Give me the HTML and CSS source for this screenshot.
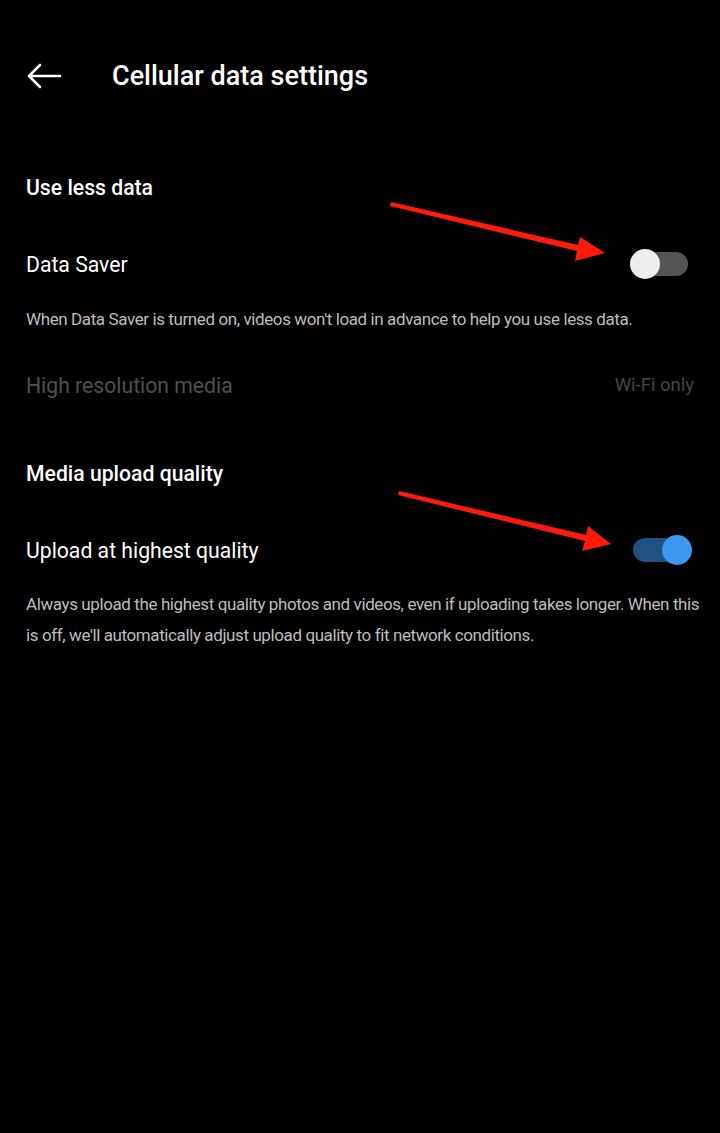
FILE: index.html
```html
<!DOCTYPE html>
<html lang="en">
<head>
    <meta charset="UTF-8">
    <meta name="viewport" content="width=device-width, initial-scale=1.0">
    <title>Cellular data settings</title>
    <link rel="stylesheet" href="styles.css">
</head>
<body>
    <div class="header">
        <svg class="back" width="36" height="26" viewBox="0 0 36 26">
            <path d="M34 13H3M14 2L3 13l11 11" fill="none" stroke="#fff" stroke-width="2.6" stroke-linecap="round" stroke-linejoin="round"/>
        </svg>
        <h1>Cellular data settings</h1>
    </div>

    <div class="section-title first">Use less data</div>
    <div class="row">
        <span class="row-label">Data Saver</span>
        <span class="switch"><span class="knob"></span></span>
    </div>
    <p class="desc">When Data Saver is turned on, videos won't load in advance to help you use less data.</p>
    <div class="row row_disabled">
        <span class="row-label">High resolution media</span>
        <span class="row-value">Wi-Fi only</span>
    </div>

    <div class="section-title second">Media upload quality</div>
    <div class="row">
        <span class="row-label">Upload at highest quality</span>
        <span class="switch switch_on"><span class="knob"></span></span>
    </div>
    <p class="desc desc_tall">Always upload the highest quality photos and videos, even if uploading takes longer. When this is off, we'll automatically adjust upload quality to fit network conditions.</p>

    <!-- red annotation arrows drawn over the screenshot -->
    <svg class="marks" width="720" height="1133" viewBox="0 0 720 1133">
        <path d="M391 202 L578 245 L580 237 L605 253 L575 261 L577 251 L390 206 Z" fill="#ff1a0a"/>
        <path d="M399 491 L586 535 L588 526 L611 544 L582 551 L585 541 L398 495 Z" fill="#ff1a0a"/>
    </svg>
</body>
</html>
```

FILE: styles.css
```css
body {
    margin: 0;
    background-color: #000;
    color: #fff;
    font-family: Roboto, "Noto Sans", sans-serif;
    position: relative;
    width: 720px;
    height: 1133px;
    overflow: hidden;
}
.header {
    display: flex;
    align-items: center;
    height: 52px;
    margin-top: 50px;
    padding: 0 26px;
}
.back {
    flex: none;
}
h1 {
    margin: 0 0 0 50px;
    font-size: 27px;
    font-weight: 500;
}
.section-title {
    font-size: 21.2px;
    font-weight: 500;
    line-height: 24px;
    padding: 0 26px;
}
.section-title.first {
    margin-top: 74px;
}
.section-title.second {
    margin-top: 57px;
}
.row {
    display: flex;
    align-items: center;
    justify-content: space-between;
    height: 52px;
    padding: 0 26px;
    margin-top: 38px;
}
.row-label {
    font-size: 21.2px;
}
.row_disabled {
    height: 40px;
    margin-top: 34px;
}
.row_disabled .row-label {
    color: #4f4f4f;
}
.row-value {
    font-size: 18.5px;
    color: #454545;
}
.switch {
    position: relative;
    width: 44px;
    height: 24px;
    margin-right: 6px;
    border-radius: 12px;
    background-color: #555;
}
.knob {
    position: absolute;
    top: -3px;
    left: -14px;
    width: 30px;
    height: 30px;
    border-radius: 50%;
    background-color: #eee;
}
.switch_on {
    background-color: #1f5282;
    margin-right: 17px;
}
.switch_on .knob {
    left: auto;
    right: -15px;
    background-color: #3d97ee;
}
.desc {
    margin: 17px 0 0;
    padding: 0 26px;
    font-size: 17px;
    line-height: 24px;
    color: #bdbdbd;
    letter-spacing: -0.4px;
}
.desc_tall {
    line-height: 31px;
    margin-top: 13px;
    padding-right: 10px;
}
.marks {
    position: absolute;
    top: 0;
    left: 0;
    pointer-events: none;
}
```
